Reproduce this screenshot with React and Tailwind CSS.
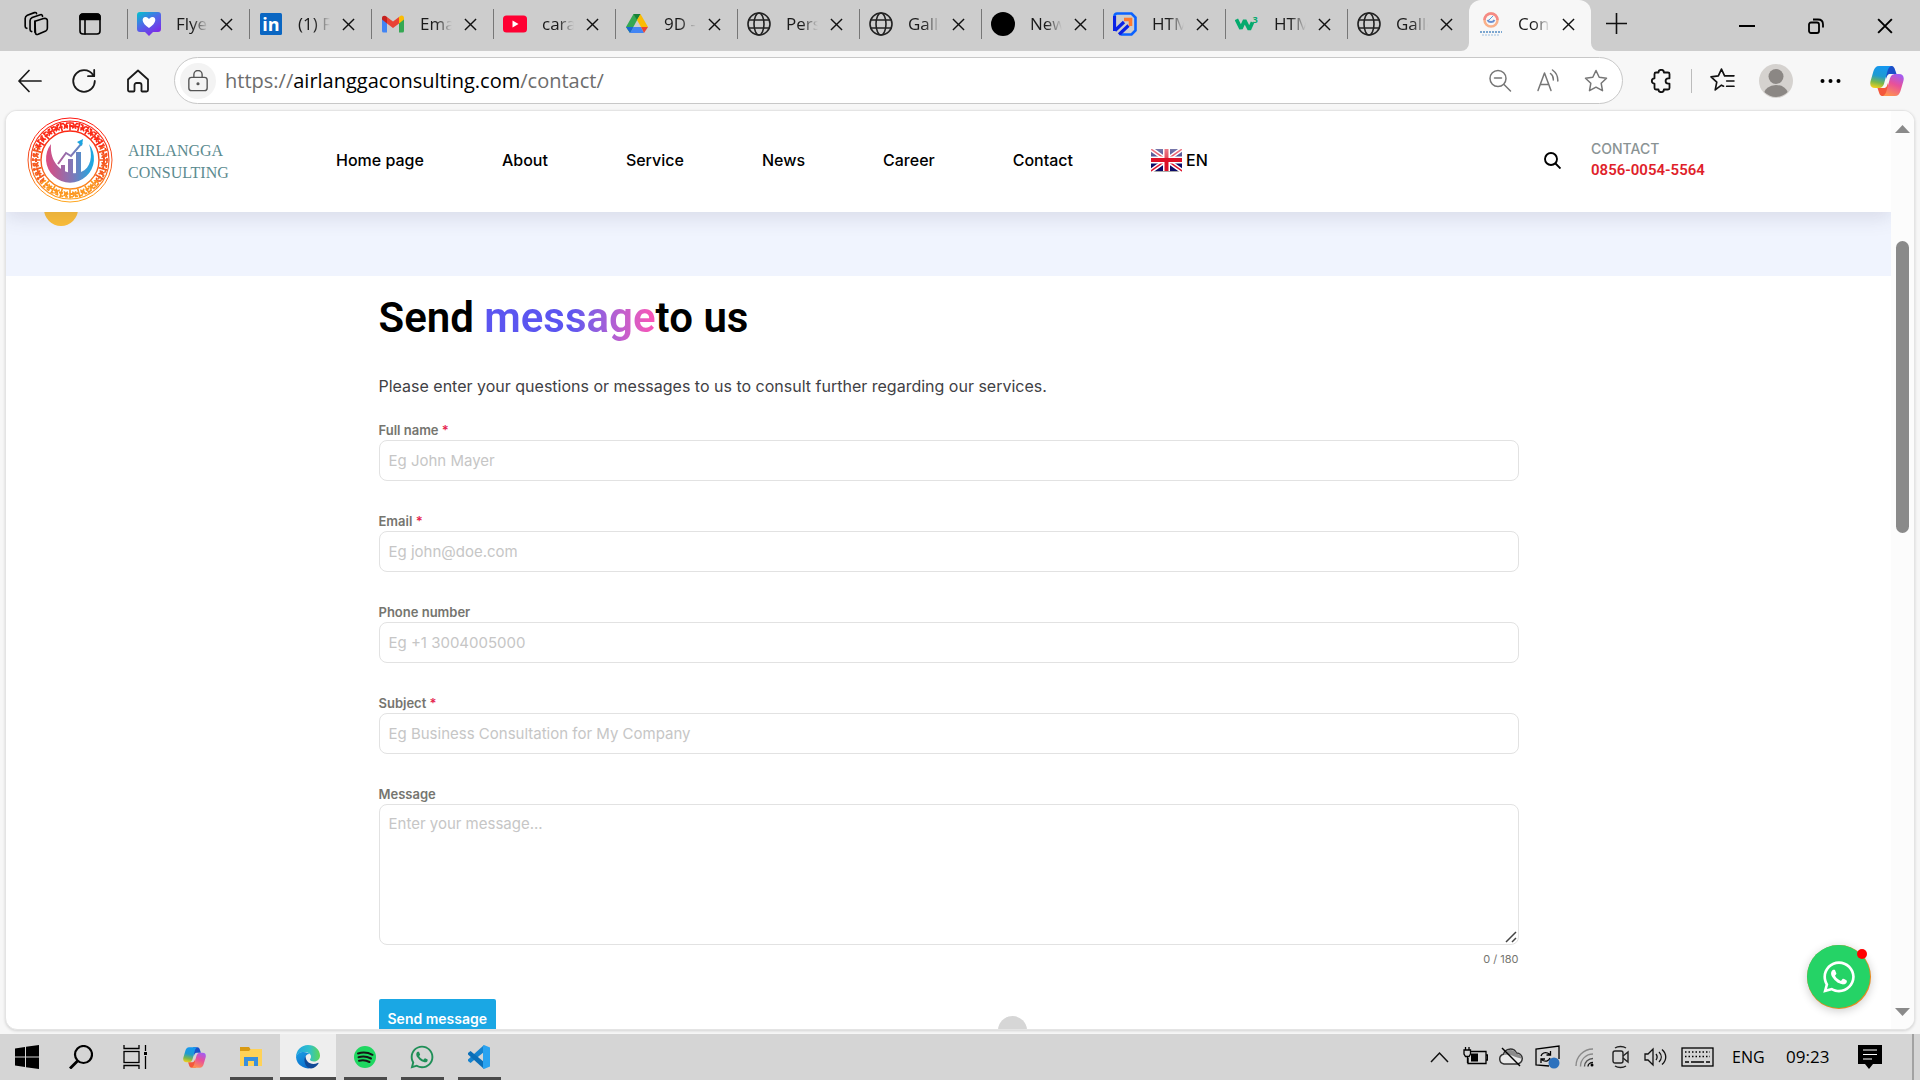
import React from "react";
import { FaWhatsapp } from "react-icons/fa";

const UI = "font-['Open_Sans',sans-serif]";

/* ---------- browser chrome icons ---------- */

function Line({ size = 24, w = 1.6, className = "", children, h }) {
  return (
    <svg width={size} height={h || size} viewBox={`0 0 24 ${h && h !== size ? h : 24}`} fill="none" stroke="currentColor" strokeWidth={w} strokeLinecap="round" strokeLinejoin="round" className={`shrink-0 ${className}`} aria-hidden="true">
      {children}
    </svg>
  );
}

const Cross = ({ size = 13, w = 1.5 }) => (
  <svg width={size} height={size} viewBox="0 0 14 14" fill="none" stroke="currentColor" strokeWidth={w} aria-hidden="true">
    <path d="M1 1l12 12M13 1L1 13" />
  </svg>
);

const Globe = () => (
  <Line w={1.6} className="text-[#222]">
    <circle cx="12" cy="12" r="11" />
    <ellipse cx="12" cy="12" rx="5" ry="11" />
    <path d="M2 8h20M2 16h20" />
  </Line>
);

const HeartPin = () => (
  <svg width="24" height="24" viewBox="0 0 24 24">
    <defs>
      <linearGradient id="pin" x1="0" y1="0" x2="0.6" y2="1">
        <stop offset="0" stopColor="#00c4cc" />
        <stop offset="0.5" stopColor="#4f6ae8" />
        <stop offset="1" stopColor="#7d2ae8" />
      </linearGradient>
    </defs>
    <path d="M3 0h18a3 3 0 013 3v14a3 3 0 01-3 3h-5l-4 4-4-4H3a3 3 0 01-3-3V3a3 3 0 013-3z" fill="url(#pin)" />
    <path d="M12 16C4 11 4.500 5 8.500 5 10.500 5 12 7 12 7s1.500-2 3.500-2C19.500 5 20 11 12 16z" fill="#fff" />
  </svg>
);

const LinkedIn = () => (
  <svg width="24" height="24" viewBox="0 0 24 24">
    <rect x="1" y="1" width="22" height="22" rx="1.500" fill="#0a66c2" />
    <text x="12" y="19" textAnchor="middle" fontSize="18" fontWeight="700" fill="#fff" fontFamily="Open Sans, sans-serif">in</text>
  </svg>
);

const Gmail = () => (
  <svg width="24" height="24" viewBox="0 0 24 24">
    <path d="M1 6v13a1.500 1.500 0 001.500 1.500H6V11z" fill="#4285f4" />
    <path d="M18 20.500h3.500A1.500 1.500 0 0023 19V6l-5 5z" fill="#34a853" />
    <path d="M18 5v6.500l5-4V6c0-2.500-2.500-3.500-4.500-1.500z" fill="#fbbc04" />
    <path d="M6 5v6.500l6 4.500 6-4.500V5l-6 4.500z" fill="#ea4335" />
    <path d="M1 6v1.500l5 4V5C4 3 1 3.500 1 6z" fill="#c5221f" />
  </svg>
);

const YouTube = () => (
  <svg width="24" height="24" viewBox="0 0 24 24">
    <rect y="3.500" width="24" height="17" rx="3.500" fill="#ff0033" />
    <path d="M9.500 8.500v7l6-3.500z" fill="#fff" />
  </svg>
);

const Drive = () => (
  <svg width="24" height="24" viewBox="0 0 24 24">
    <path d="M8.500 2h7L5 21 1 15z" fill="#34a853" />
    <path d="M8.500 2h7l-3.500 6z" fill="#188038" />
    <path d="M15.500 2L23 15h-7L12 8z" fill="#fbbc04" />
    <path d="M5 21l3.500-6H16l3 6z" fill="#4285f4" />
    <path d="M1 15h7.500L5 21z" fill="#1967d2" />
    <path d="M16 15h7l-4 6z" fill="#ea4335" />
  </svg>
);

const ArrowLogo = () => (
  <svg width="24" height="24" viewBox="0 0 24 24" fill="none">
    <path d="M8 22.500h10.500l4-4V5.500l-4-4H4A2.500 2.500 0 001.500 4v15" stroke="#0b63ff" strokeWidth="2.600" />
    <path d="M1.500 4v15M2 18.500L11 10M6 22.500l9.500-9" stroke="#0a22e6" strokeWidth="3.200" />
    <path d="M11 7.500h6.500v6.500" stroke="#ff7a2f" strokeWidth="3.600" />
  </svg>
);

const W3 = () => (
  <svg width="26" height="24" viewBox="0 0 26 24">
    <path d="M1.500 7l5 10 4-9 5 10 3.500-8" fill="none" stroke="#04aa6d" strokeWidth="4" strokeLinejoin="bevel" />
    <text x="19" y="11" fontSize="10" fontWeight="700" fill="#04aa6d" fontFamily="Open Sans, sans-serif">3</text>
  </svg>
);

const MiniLogo = () => (
  <svg width="24" height="24" viewBox="0 0 24 24">
    <circle cx="12" cy="8" r="6.500" fill="none" stroke="#f9b08a" strokeWidth="2.500" />
    <path d="M5.500 8a6.500 6.500 0 0113 0" fill="none" stroke="#f58a86" strokeWidth="2.500" />
    <path d="M8.500 8a4 4 0 007 0" fill="none" stroke="#6a8fd0" strokeWidth="2" />
    <path d="M10 8l2-2 2-2" stroke="#5a9be0" fill="none" />
    <path d="M1 20h22" stroke="#7ba6d0" strokeWidth="2" strokeDasharray="2 1" />
    <path d="M3 23h18" stroke="#9dbfe0" strokeWidth="1" strokeDasharray="2 1" />
  </svg>
);

function Copilot({ size, id }) {
  return (
    <svg width={size} height={size} viewBox="0 0 34 32" aria-hidden="true">
      <defs>
        <linearGradient id={`${id}a`} x1="0.500" y1="0" x2="0.300" y2="1">
          <stop offset="0" stopColor="#1598f0" />
          <stop offset="0.450" stopColor="#1f9bd0" />
          <stop offset="0.750" stopColor="#7cb84a" />
          <stop offset="1" stopColor="#f2cf1d" />
        </linearGradient>
        <linearGradient id={`${id}b`} x1="0.700" y1="0" x2="0.300" y2="1">
          <stop offset="0" stopColor="#a45cf0" />
          <stop offset="0.450" stopColor="#e8509a" />
          <stop offset="1" stopColor="#ff9350" />
        </linearGradient>
      </defs>
      <path d="M15 1h6c3 0 3.500 2 4.500 5l1 3h-6c-3 0-3.500 2-4.500 5z" fill="#1b4fc9" />
      <path d="M19 31h-6c-3 0-3.500-2-4.500-5l-1-3h6c3 0 3.500-2 4.500-5z" fill="#f4583c" />
      <path d="M9 1h12c-2 1-3 3-3.600 5.500L14.500 17c-1 4-2.500 6-6 6H5c-4 0-5.500-3-4.400-7L3.500 6C4.500 3 6 1 9 1z" fill={`url(#${id}a)`} />
      <path d="M25 31H13c2-1 3-3 3.600-5.500L19.500 15c1-4 2.500-6 6-6H29c4 0 5.500 3 4.400 7L30.500 26c-1 3-2.500 5-5.500 5z" fill={`url(#${id}b)`} />
    </svg>
  );
}

const tabs = [
  { text: "Flyer", icon: <HeartPin /> },
  { text: "(1) Fe", icon: <LinkedIn /> },
  { text: "Email", icon: <Gmail /> },
  { text: "cara", icon: <YouTube /> },
  { text: "9D - ", icon: <Drive /> },
  { text: "Perso", icon: <Globe /> },
  { text: "Galle", icon: <Globe /> },
  { text: "New", icon: <span className="block size-6 rounded-full bg-black" /> },
  { text: "HTML", icon: <ArrowLogo /> },
  { text: "HTML", icon: <W3 /> },
  { text: "Galle", icon: <Globe /> },
  { text: "Conta", icon: <MiniLogo />, active: true },
];

function Tab({ text, icon, active }) {
  return (
    <div className={active ? "relative flex w-[122px] items-center rounded-t-xl bg-[#f7f7f7] pb-[3px]" : "flex w-[122px] items-center pb-[3px]"}>
      {active ? (
        <>
          <svg className="absolute bottom-0 -left-2" width="8" height="8" viewBox="0 0 8 8"><path d="M8 0v8H0a8 8 0 008-8z" fill="#f7f7f7" /></svg>
          <svg className="absolute -right-2 bottom-0" width="8" height="8" viewBox="0 0 8 8"><path d="M0 0v8h8a8 8 0 01-8-8z" fill="#f7f7f7" /></svg>
          <span className="w-px" />
        </>
      ) : (
        <span className="h-[30px] w-px bg-[#777]" />
      )}
      <button type="button" className="ml-[9px] flex items-center">
        <span className="flex w-6 shrink-0 justify-center">{icon}</span>
        <span className="ml-[15px] w-8 overflow-hidden text-left text-[17px] whitespace-nowrap text-[#1a1a1a] [mask-image:linear-gradient(to_right,#000_50%,transparent)]">{text}</span>
      </button>
      <button type="button" aria-label="Close tab" className="ml-3 text-[#111]"><Cross /></button>
    </div>
  );
}

function TabStrip() {
  return (
    <div className="flex h-[51px] shrink-0 items-stretch bg-[#cdcdcd]">
      <div className="flex w-[127px] items-center pb-[3px] pl-[23px]">
        <button type="button" aria-label="Workspaces">
          <Line size={26} w={1.500}>
            <path d="M11 9.500l8-2.500c2-.5 3.500 0 3.500 2v7c0 1.500-.5 2-1.500 2.500l-7 3c-1.500.5-2.500 0-2.500-1.500z" />
            <path d="M11 9.500v10M8 19c-1-.3-1.500-1-1.500-2V9c0-1.500.5-2.200 2-3l7.500-2.500c1.500-.4 2 .5 2 1.500M3.500 16c-1-.3-1.500-1-1.500-2V7c0-1.500.5-2.200 2-3l6.500-2.500c1.500-.4 2 .2 2 1" />
          </Line>
        </button>
        <button type="button" aria-label="Tab actions" className="ml-[29px]">
          <Line size={24} w={1.600}>
            <rect x="2" y="2" width="20" height="20" rx="3" />
            <path d="M2 7.500V5a3 3 0 013-3h14a3 3 0 013 3v2.500z" fill="currentColor" />
            <path d="M7 8v14" />
          </Line>
        </button>
      </div>
      {tabs.map((t, i) => <Tab key={i} {...t} />)}
      <button type="button" aria-label="New tab" className="ml-[15px] flex items-center pb-1">
        <svg width="21" height="21" viewBox="0 0 21 21" stroke="#111" strokeWidth="1.600"><path d="M10.500 0v21M0 10.500h21" /></svg>
      </button>
      <div className="ml-auto flex items-center gap-[53px] pr-[27px]">
        <button type="button" aria-label="Minimize"><svg width="16" height="16" viewBox="0 0 16 16" stroke="#000" strokeWidth="2"><path d="M0 8h16" /></svg></button>
        <button type="button" aria-label="Restore">
          <svg width="16" height="16" viewBox="0 0 16 16" fill="none" stroke="#000" strokeWidth="1.800"><rect x="1" y="4.500" width="10" height="10.500" rx="2" /><path d="M5 1.500h5c3 0 5 2 5 5v3" /></svg>
        </button>
        <button type="button" aria-label="Close"><Cross size={16} w={1.700} /></button>
      </div>
    </div>
  );
}

const StarPath = "M12 1.500l3.200 6.700 7.300 1-5.300 5.100 1.300 7.400L12 18.200l-6.500 3.500 1.300-7.400-5.300-5.100 7.300-1z";

function Toolbar() {
  return (
    <div className="flex h-[59px] shrink-0 items-center bg-[#f7f7f7] pr-4 pl-[18px]">
      <div className="flex items-center gap-[30px] text-[#1a1a1a]">
        <button type="button" aria-label="Back"><Line w={1.700}><path d="M23 12H1M11 1.500L1 12l10 10.500" /></Line></button>
        <button type="button" aria-label="Refresh"><Line w={1.800}><path d="M22.800 12A10.800 10.800 0 1112 1.200c4 0 7.500 2.200 9.500 5.500M22.200 1v6.200H16" /></Line></button>
        <button type="button" aria-label="Home"><Line w={1.800}><path d="M2 10.500L12 1.500l10 9V21a1.500 1.500 0 01-1.500 1.500h-4A1 1 0 0115.500 21v-5a2 2 0 00-2-2h-3a2 2 0 00-2 2v5.500a1 1 0 01-1 1h-4A1.500 1.500 0 012 21z" /></Line></button>
      </div>
      <div className="ml-6 flex h-[47px] flex-1 items-center rounded-full border border-[#c8c8c8] bg-white pr-[14px] pl-[5px]">
        <button type="button" aria-label="Site information" className="flex size-9 items-center justify-center rounded-full bg-[#f3f3f3] text-[#555]">
          <Line size={22} w={1.500}><rect x="2" y="8" width="20" height="14.500" rx="3" /><path d="M7.500 8V5a4.500 4.500 0 019 0v3" /><circle cx="12" cy="15" r="1" fill="currentColor" /></Line>
        </button>
        <div className="ml-[9px] flex-1 pt-px text-xl text-[#6d6d6d]">
          <span>https://</span><span className="text-black">airlanggaconsulting.com</span><span>/contact/</span>
        </div>
        <div className="flex items-center gap-6 text-[#767676]">
          <button type="button" aria-label="Zoom out"><Line w={1.500}><circle cx="10" cy="9.500" r="8" /><path d="M6.500 9h7M16 15.500l6.500 6.500" /></Line></button>
          <button type="button" aria-label="Read aloud"><Line w={1.500}><path d="M2 21.500L8.500 4 15 21.500M4.500 15.500h8M14.500 4.500c2 1.500 3 4 2.800 6.500M16.500 1c3.500 2.500 5.500 6.500 5.300 11" /></Line></button>
          <button type="button" aria-label="Favorite this page"><Line w={1.500}><path d={StarPath} /></Line></button>
        </div>
      </div>
      <div className="flex items-center pl-[26px] text-[#111]">
        <button type="button" aria-label="Extensions"><Line w={1.800}><path d="M9.500 3.500a2.700 2.700 0 015.400 0H19a1.500 1.500 0 011.500 1.500v4.300h-1.200a2.700 2.700 0 000 5.400h1.200V19a1.500 1.500 0 01-1.500 1.500h-4.100a2.700 2.700 0 01-5.400 0H7A1.500 1.500 0 015.500 19v-4.300a2.700 2.700 0 010-5.400V5A1.500 1.500 0 017 3.500z" /></Line></button>
        <span className="ml-[18px] h-6 w-px bg-[#bcbcbc]" />
        <button type="button" aria-label="Favorites" className="ml-[18px]"><Line size={25} w={1.600}><path d="M13 17.500L11 16.500l-6 4.500 1.500-7.500L1 8.500l7-1L11 1l3 6.500M14 7.500h9M16 12.500h7M16 17.500h7" /></Line></button>
        <button type="button" aria-label="Profile" className="ml-6">
          <svg width="34" height="34" viewBox="0 0 34 34"><defs><clipPath id="av"><circle cx="17" cy="17" r="16" /></clipPath></defs><circle cx="17" cy="17" r="17" fill="#d5d2cf" /><circle cx="17" cy="12.500" r="7.500" fill="#8b8784" /><ellipse cx="17" cy="30" rx="12" ry="9" fill="#8b8784" clipPath="url(#av)" /></svg>
        </button>
        <button type="button" aria-label="Settings and more" className="ml-[27px]"><svg width="21" height="6" viewBox="0 0 21 6"><circle cx="2.500" cy="3" r="2" /><circle cx="10.500" cy="3" r="2" /><circle cx="18.500" cy="3" r="2" /></svg></button>
        <button type="button" aria-label="Copilot" className="ml-[29px]"><Copilot size={34} id="top" /></button>
      </div>
    </div>
  );
}

/* ---------- web page ---------- */

function SiteLogo() {
  const motifs = Array.from({ length: 24 }, (_, i) => i * 15);
  return (
    <svg width="86" height="86" viewBox="0 0 86 86" fill="none" aria-hidden="true">
      <defs>
        <linearGradient id="ring" x1="0" y1="0" x2="0" y2="86" gradientUnits="userSpaceOnUse">
          <stop offset="0" stopColor="#ff1510" />
          <stop offset="0.500" stopColor="#f5501f" />
          <stop offset="1" stopColor="#ffa81e" />
        </linearGradient>
        <linearGradient id="core" x1="18" y1="0" x2="68" y2="0" gradientUnits="userSpaceOnUse">
          <stop offset="0" stopColor="#e0487e" />
          <stop offset="0.550" stopColor="#7f78b8" />
          <stop offset="1" stopColor="#12aee6" />
        </linearGradient>
      </defs>
      <g stroke="url(#ring)">
        <circle cx="43" cy="43" r="42" strokeWidth="1" />
        <circle cx="43" cy="43" r="39" strokeWidth="1.200" />
        <circle cx="43" cy="43" r="29" strokeWidth="1.400" />
        <circle cx="43" cy="43" r="34" strokeWidth="2" strokeDasharray="4 1.500" />
        <circle cx="43" cy="43" r="37" strokeWidth="1.600" strokeDasharray="3 2" />
      </g>
      {motifs.map((a) => (
        <g key={a} transform={`rotate(${a} 43 43)`} stroke={a < 75 || a > 285 ? "#fb2a18" : a > 120 && a < 240 ? "#fb981f" : "#f55a20"}>
          <path d="M43 4.500v9M40 6.500c-2 1.500-1 4.500 1 4.500M46 6.500c2 1.500 1 4.500-1 4.500" strokeWidth="1.600" />
        </g>
      ))}
      <path d="M24 27a24 24 0 1038 0c4 12 2 24-8 28-14 5-32-6-30-28z" fill="url(#core)" />
      <g fill="url(#core)">
        <path d="M34 48h4v15h-4zM41 42h5v22h-5zM49 35h5v28h-5z" />
      </g>
      <path d="M31 47l8-11 5 3 11-13" stroke="url(#core)" strokeWidth="2" />
      <path d="M50 25l6-3-1 7z" fill="#1aa5e0" />
    </svg>
  );
}

const Flag = () => (
  <svg width="31" height="23" viewBox="0 0 31 23" aria-hidden="true">
    <defs>
      <linearGradient id="gloss" x1="0" y1="0" x2="0" y2="1">
        <stop offset="0" stopColor="#fff" stopOpacity="0.450" />
        <stop offset="1" stopColor="#fff" stopOpacity="0.250" />
      </linearGradient>
    </defs>
    <rect y="1" width="31" height="22" fill="#aaa" />
    <rect width="31" height="22" fill="#0c0c68" />
    <path d="M0 0l31 22M31 0L0 22" stroke="#fff" strokeWidth="4.500" />
    <path d="M0 0l31 22M31 0L0 22" stroke="#e0142d" strokeWidth="1.500" />
    <path d="M15.500 0v22M0 11h31" stroke="#fff" strokeWidth="7" />
    <path d="M15.500 0v22M0 11h31" stroke="#dd1027" strokeWidth="4" />
    <rect width="31" height="9" fill="url(#gloss)" />
  </svg>
);

function SiteHeader() {
  return (
    <header className="relative z-10 flex h-[101px] shrink-0 items-center bg-white pb-[3px] pl-[21px] shadow-[0_6px_18px_rgba(60,60,90,0.13)]">
      <a href="#home" className="flex items-center gap-[15px]">
        <SiteLogo />
        <span className="flex w-[98px] flex-col pt-1 font-['Liberation_Serif',serif] text-base leading-[22px] text-[#5c8b90]">
          <span>AIRLANGGA</span>
          <span>CONSULTING</span>
        </span>
      </a>
      <nav className="ml-[110px] flex items-center gap-[78px] text-base font-medium text-black">
        {["Home page", "About", "Service", "News", "Career", "Contact"].map((n) => (
          <a key={n} href="#nav" className="whitespace-nowrap">{n}</a>
        ))}
        <a href="#lang" className="flex items-center gap-1"><Flag />EN</a>
      </nav>
      <div className="ml-auto flex items-center pr-[185px]">
        <button type="button" aria-label="Search" className="mr-[30px]">
          <svg width="17" height="17" viewBox="0 0 17 17" fill="none" stroke="#000" strokeWidth="1.900"><circle cx="7" cy="7" r="6" /><path d="M11.500 11.500l5 5" /></svg>
        </button>
        <div className="flex w-[115px] flex-col leading-[22px] whitespace-nowrap">
          <span className="text-sm font-medium text-[#8a9394]">CONTACT</span>
          <a href="#phone" className="font-['Roboto',sans-serif] text-[15px] font-semibold text-[#e01f2b]">0856-0054-5564</a>
        </div>
      </div>
    </header>
  );
}

function Label({ id, text, required }) {
  return (
    <label htmlFor={id} className="block text-[13px] leading-5 font-semibold text-[#75756f]">
      {text}{required && <span className="text-[#e5264f]"> *</span>}
    </label>
  );
}

const fields = [
  { id: "name", label: "Full name", required: true, placeholder: "Eg John Mayer" },
  { id: "email", label: "Email", required: true, placeholder: "Eg john@doe.com" },
  { id: "phone", label: "Phone number", placeholder: "Eg +1 3004005000" },
  { id: "subject", label: "Subject", required: true, placeholder: "Eg Business Consultation for My Company" },
];

function ContactForm() {
  return (
    <section className="mx-auto w-full max-w-[1140px] pt-3">
      <h1 className="font-['Roboto',sans-serif] text-[42px] leading-[60px] font-semibold text-black">
        Send <span className="bg-linear-to-r from-[#5b55f0] from-50% to-[#ff52b4] bg-clip-text text-transparent">message</span>to us
      </h1>
      <p className="mt-6 text-base leading-7 text-[#3f4145]">Please enter your questions or messages to us to consult further regarding our services.</p>
      <form className="mt-5 flex flex-col items-stretch gap-[30px]">
        {fields.map((f) => (
          <div key={f.id}>
            <Label id={f.id} text={f.label} required={f.required} />
            <input id={f.id} type="text" placeholder={f.placeholder} className="block h-[41px] w-full rounded-lg border border-[#e2e2e2] bg-white px-[9px] text-[15px] placeholder:text-[#c6c6c6]" />
          </div>
        ))}
        <div>
          <Label id="message" text="Message" />
          <div className="relative">
            <textarea id="message" placeholder="Enter your message..." className="block h-[141px] w-full resize-none rounded-lg border border-[#e2e2e2] bg-white px-[9px] py-2 text-[15px] placeholder:text-[#c6c6c6]" />
            <svg className="pointer-events-none absolute right-0.5 bottom-0.5" width="12" height="12" viewBox="0 0 12 12" stroke="#444" strokeWidth="1.500" aria-hidden="true"><path d="M1 11L11 1M7 11l4-4" /></svg>
          </div>
          <div className="mt-1 text-right text-[11px] leading-5 text-[#75756f]">0 / 180</div>
        </div>
        <button type="button" className="h-10 self-start rounded-xs bg-[#1aa7e4] px-[9px] text-sm font-semibold text-white">Send message</button>
      </form>
    </section>
  );
}

function WebPage() {
  return (
    <div className="mx-[5px] mb-[4px] flex min-h-0 flex-1 overflow-hidden rounded-xl border border-[#e4e4e4] bg-white font-['Inter',sans-serif] shadow-[0_1px_3px_rgba(0,0,0,0.15)]">
      <main className="relative flex min-w-0 flex-1 flex-col overflow-hidden">
        <SiteHeader />
        <div className="relative h-16 shrink-0 overflow-hidden bg-[#f0f4fe]">
          <span className="absolute -top-5 left-[38px] size-[34px] rounded-full bg-[#fcbe39]" />
        </div>
        <ContactForm />
        <span className="absolute -bottom-4 left-[992px] size-[29px] rounded-full bg-[#d6d6d6]" />
        <div className="absolute right-5 bottom-5 size-16 rounded-full bg-[#e58a1f] shadow-[0_2px_10px_rgba(0,0,0,0.2)]">
          <a href="#whatsapp" aria-label="WhatsApp chat" className="flex size-[63px] items-center justify-center rounded-full bg-[#25d366] text-white">
            <FaWhatsapp size={36} />
          </a>
          <span className="absolute top-1 right-1 size-[10px] rounded-full bg-[#ff0000]" />
        </div>
      </main>
      <div className="flex w-[23px] shrink-0 flex-col items-center bg-[#fcfcfc] pt-[14px] pb-[13px]">
        <svg width="15" height="8" viewBox="0 0 15 8"><path d="M7.500 0L15 8H0z" fill="#8a8a8a" /></svg>
        <span className="mt-[108px] h-[292px] w-[13px] rounded-full bg-[#8a8a8a]" />
        <svg className="mt-auto" width="15" height="8" viewBox="0 0 15 8"><path d="M0 0h15L7.500 8z" fill="#8a8a8a" /></svg>
      </div>
    </div>
  );
}

/* ---------- taskbar ---------- */

const Explorer = () => (
  <svg width="24" height="24" viewBox="0 0 24 24">
    <path d="M1 2h9l2 3v3H1z" fill="#d99a12" />
    <path d="M1 6h9l2-2h11v17H1z" fill="#ffd257" />
    <path d="M5 21v-9h14v9h-4v-5H9v5z" fill="#3a8fdc" />
  </svg>
);

const EdgeLogo = () => (
  <svg width="24" height="24" viewBox="0 0 24 24">
    <defs>
      <linearGradient id="eg1" x1="0" y1="0.300" x2="1" y2="0.300"><stop offset="0" stopColor="#22a4e0" /><stop offset="0.550" stopColor="#2fc0cc" /><stop offset="1" stopColor="#5ed755" /></linearGradient>
      <linearGradient id="eg2" x1="0" y1="0" x2="0.600" y2="1"><stop offset="0" stopColor="#1b9de2" /><stop offset="1" stopColor="#0a6ccc" /></linearGradient>
    </defs>
    <path d="M0 12A12 12 0 0112 0c7 0 12 5 12 10.500 0 3.500-2.500 6-6 6-2.500 0-4-1-4-2 0-.8 1-1 1-3C15 9 12 7 8.500 7 4 7 1 9 0 12z" fill="url(#eg1)" />
    <path d="M0 12c1-3.500 4-5 7.500-5 3 0 5 1 6 2-3 0-4.500 2-4.500 5 0 5 4 8.500 10 7A12 12 0 010 12z" fill="url(#eg2)" />
    <path d="M9.500 11C7 15 9 23 15 23.600 18.500 23 21 21 22.500 18.500c.3-.6-.2-1-.8-.6C15.500 21 9.500 17 9.500 11z" fill="#114a97" />
  </svg>
);

const SpotifyLogo = () => (
  <svg width="24" height="24" viewBox="0 0 24 24" fill="none">
    <circle cx="12" cy="12" r="11" fill="#1ed760" />
    <path d="M5 8.500c5-1.500 10-1 14.500 1.300M5.500 12.300c4.500-1.300 8.500-.8 12.500 1.200M6 15.800c4-1 7-.7 10.500 1.200" stroke="#161616" strokeWidth="2" strokeLinecap="round" />
  </svg>
);

const CodeLogo = () => (
  <svg width="24" height="24" viewBox="0 0 24 24">
    <path d="M17 0v7L3.500 18 1 16v-1.500z" fill="#1583cf" />
    <path d="M17 24v-7L3.500 6 1 8v1.500z" fill="#0a6fb8" />
    <path d="M17 0l6 2.500v19L17 24l-1-1.500v-21z" fill="#2aa3f0" />
  </svg>
);

const apps = [
  { name: "File Explorer", icon: <Explorer /> },
  { name: "Edge", icon: <EdgeLogo />, active: true },
  { name: "Spotify", icon: <SpotifyLogo /> },
  { name: "WhatsApp", icon: <FaWhatsapp size={26} color="#1f8f57" /> },
  { name: "Visual Studio Code", icon: <CodeLogo /> },
];

function Tray() {
  return (
    <div className="ml-auto flex items-center text-black">
      <svg width="19" height="12" viewBox="0 0 19 12" fill="none" stroke="#111" strokeWidth="1.500"><path d="M1 11l8.500-9L18 11" /></svg>
      <svg className="ml-[14px]" width="25" height="20" viewBox="0 0 25 20" fill="none" stroke="#000" strokeWidth="1.300">
        <path d="M8 4.500h15v12H5V11M23 8h1.500v5H23" /><path d="M2.500 0v3M6 0v3M1 3h6.500v4L6 9.500H2.500L1 7zM4.500 9.500V16" /><rect x="8" y="6.500" width="7" height="8" fill="#000" stroke="none" />
      </svg>
      <svg className="ml-2.5" width="25" height="20" viewBox="0 0 25 20" fill="none" stroke="#333" strokeWidth="1.500">
        <path d="M6 17a5 5 0 01-.5-9.800A7 7 0 0118.500 6a5.500 5.500 0 01.5 11z" fill="#e9e9e9" />
        <path d="M6 8c1-4 4-5.500 7-5 3 .3 5 2 5.500 4 3 0 5 2 4.500 4.500-4-1-7-2-9-3-3-1-5-.8-8-.5z" fill="#8c8c8c" stroke="none" />
        <path d="M4 1l18 18" stroke="#000" />
      </svg>
      <svg className="ml-3" width="25" height="24" viewBox="0 0 25 24" fill="none" stroke="#000" strokeWidth="1.300">
        <path d="M14 21L1 20V4l23-3v13" /><path d="M6 11c1-3 4-4 6.500-3l3 1.500M15.500 6v4h-4M15 13c-1 3-4 4-7 2.500L6.500 14M6 18v-4h4" /><circle cx="19" cy="18" r="5.500" fill="#2c71bd" stroke="none" />
      </svg>
      <svg className="ml-[15px]" width="19" height="19" viewBox="0 0 19 19" fill="none" stroke="#8a8a8a" strokeWidth="1.400">
        <path d="M1 18C1 8.500 8.500 1 18 1M5.500 18.500C5.500 11.500 11 6 18 6" /><path d="M9.500 18.500c0-4.500 4-8 8.500-8" stroke="#555" /><path d="M13 18.500c0-2.500 2.500-4 5-4" stroke="#111" /><circle cx="17" cy="17" r="1.500" fill="#000" stroke="none" />
      </svg>
      <svg className="ml-[18px]" width="18" height="24" viewBox="0 0 18 24" fill="none" stroke="#222" strokeWidth="1.400">
        <rect x="1" y="6" width="10" height="12" rx="2" /><path d="M11 11l5-4v10l-5-4M3 3c3-2 8-2 11 0M3 21c3 2 8 2 11 0" />
      </svg>
      <svg className="ml-[14px]" width="23" height="20" viewBox="0 0 23 20" fill="none" stroke="#111" strokeWidth="1.300">
        <path d="M1 7v6h3l5 5V2L4 7zM12 7c1.500 2 1.500 4 0 6M15 5c3 3 3 7 0 10M18 2.500c5 4.500 5 10.500 0 15" />
      </svg>
      <svg className="ml-[14px]" width="33" height="20" viewBox="0 0 33 20" fill="none" stroke="#000" strokeWidth="1.300">
        <rect x="1" y="1" width="31" height="18" /><path d="M4 5h25M4 9.500h25" strokeDasharray="1.500 2" /><path d="M4 15h4M10 15h13M25 15h4" />
      </svg>
      <span className="ml-[18px] w-[34px] text-base">ENG</span>
      <span className="ml-5 w-[45px] text-[17px]">09:23</span>
      <button type="button" aria-label="Notifications" className="ml-[27px]">
        <svg width="24" height="24" viewBox="0 0 24 24"><path d="M0 0h24v19H15l-4 5-4-5H0z" /><path d="M5 5h14M5 9.500h14M5 14h9" stroke="#fff" strokeWidth="1.200" /></svg>
      </button>
      <span className="mr-1.5 ml-[30px] h-[46px] w-0.5 bg-[#a2a2a2]" />
    </div>
  );
}

function Taskbar() {
  return (
    <footer className="flex h-[46px] shrink-0 items-stretch bg-[#d5d5d5]">
      <button type="button" aria-label="Start" className="flex w-[54px] items-center justify-center">
        <svg width="24" height="24" viewBox="0 0 24 24"><path d="M0 3.500L10 2v9.500H0zM11 1.800L24 0v11.500H11zM0 12.500h10V22L0 20.500zM11 12.500h13V24l-13-1.800z" /></svg>
      </button>
      <button type="button" aria-label="Search" className="flex w-[54px] items-center justify-center">
        <svg width="24" height="24" viewBox="0 0 24 24" fill="none" stroke="#000" strokeWidth="2.200"><circle cx="14.500" cy="9.500" r="8.500" /><path d="M8.500 16L1 23.500" strokeWidth="2.800" /></svg>
      </button>
      <button type="button" aria-label="Task view" className="flex w-[54px] items-center justify-center">
        <svg width="24" height="24" viewBox="0 0 24 24" fill="none" stroke="#000" strokeWidth="1.300"><path d="M1 0v3.500h15V0M1 24v-3.500h15V24M22.500 0v6M22.500 11v13" /><rect x="1" y="6.500" width="15" height="11" /><path d="M21 7h3v3h-3z" fill="#000" stroke="none" /></svg>
      </button>
      <button type="button" aria-label="Copilot" className="flex w-16 items-center justify-center">
        <Copilot size={23} id="bar" />
      </button>
      <div className="-ml-[3px] flex gap-[1px]">
        {apps.map((a) => (
          <button key={a.name} type="button" aria-label={a.name} className={a.active ? "flex w-14 flex-col items-center bg-[#eeeeee]" : "flex w-14 flex-col items-center"}>
            <span className="flex flex-1 items-center pt-[3px]">{a.icon}</span>
            <span className={a.active ? "h-[3px] w-full bg-[#4a4a4a]" : "h-[3px] w-[43px] bg-[#4a4a4a]"} />
          </button>
        ))}
      </div>
      <Tray />
    </footer>
  );
}

export default function App() {
  return (
    <div className={`flex h-screen flex-col overflow-hidden bg-[#f7f7f7] ${UI}`}>
      <TabStrip />
      <Toolbar />
      <WebPage />
      <Taskbar />
    </div>
  );
}
